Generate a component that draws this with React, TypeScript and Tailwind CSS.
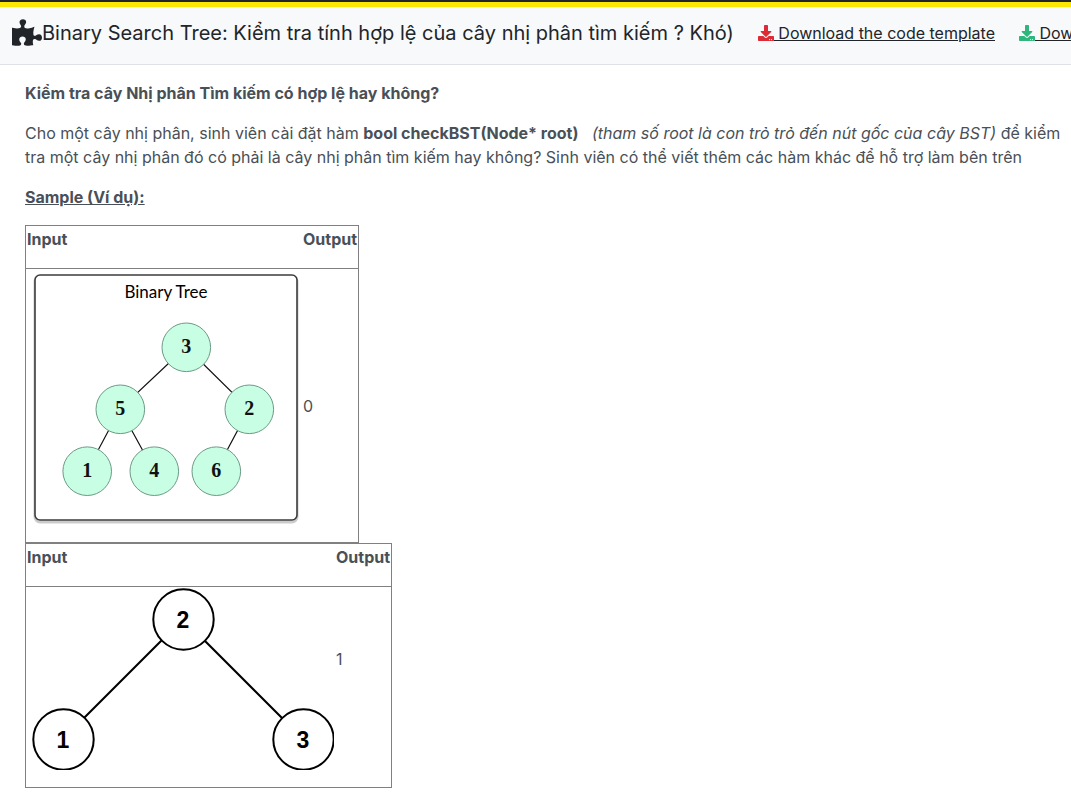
import React from "react";
import { FaDownload, FaPuzzlePiece } from "react-icons/fa";

type Point = { label: string; x: number; y: number };

const mintNodes: Point[] = [
  { label: "3", x: 159.3, y: 77.3 },
  { label: "5", x: 93.3, y: 139.3 },
  { label: "2", x: 222.3, y: 139.3 },
  { label: "1", x: 60.2, y: 201.2 },
  { label: "4", x: 127.3, y: 201.2 },
  { label: "6", x: 189.3, y: 201.2 },
];

const plainNodes: Point[] = [
  { label: "2", x: 156, y: 31 },
  { label: "1", x: 36, y: 151 },
  { label: "3", x: 276, y: 151 },
];

function InvalidTree() {
  return (
    <svg width="274" height="255" viewBox="0 0 274 255" className="block" role="img" aria-label="Binary Tree">
      <rect x="8" y="7" width="262" height="245" rx="5" fill="none" stroke="#000" strokeOpacity="0.2" strokeWidth="3" />
      <rect x="8" y="5" width="262" height="245" rx="5" fill="#fff" stroke="#3c3c3c" strokeWidth="1.6" />
      <text x="139" y="28" textAnchor="middle" fontFamily="Lato, sans-serif" fontSize="17" fill="#000">
        Binary Tree
      </text>
      <path d="M159 77L93 139L60 201M93 139L127 201M159 77L222 139L189 201" fill="none" stroke="#111" strokeWidth="1.2" />
      {mintNodes.map((n) => (
        <g key={n.label}>
          <circle cx={n.x} cy={n.y} r="24.3" fill="#c8ffe4" stroke="#6d9a85" strokeWidth="1" />
          <text
            x={n.x}
            y={n.y + 6}
            textAnchor="middle"
            fontFamily="'Liberation Serif', serif"
            fontWeight="700"
            fontSize="20"
            fill="#111"
          >
            {n.label}
          </text>
        </g>
      ))}
    </svg>
  );
}

function ValidTree() {
  return (
    <svg width="307" height="182" viewBox="0 0 307 182" className="block" role="img" aria-label="2, 1, 3">
      <path d="M36 151L156 31L276 151" fill="none" stroke="#000" strokeWidth="2" />
      {plainNodes.map((n) => (
        <g key={n.label}>
          <circle cx={n.x + 0.5} cy={n.y + 0.5} r="30.2" fill="#fff" stroke="#000" strokeWidth="2" />
          <text
            x={n.x}
            y={n.y + 9}
            textAnchor="middle"
            fontFamily="'Liberation Sans', sans-serif"
            fontWeight="700"
            fontSize="23"
            fill="#000"
          >
            {n.label}
          </text>
        </g>
      ))}
    </svg>
  );
}

function Sample({ input, children }: { input: React.ReactNode; children: React.ReactNode }) {
  return (
    <table className="border-collapse border border-[#808080]">
      <thead>
        <tr className="border-b border-[#808080] text-left">
          <th scope="col" className="p-px pb-[17px] font-bold">Input</th>
          <th scope="col" className="p-px pb-[17px] font-bold">Output</th>
        </tr>
      </thead>
      <tbody>
        <tr>
          <td className="p-px pb-[17px]">{input}</td>
          <td className="p-px">{children}</td>
        </tr>
      </tbody>
    </table>
  );
}

export default function App() {
  return (
    <div className="overflow-x-hidden bg-white font-['Inter','Noto_Sans',sans-serif] text-base text-[#495057]">
      <div className="h-[7px] border-t-2 border-[#212529] bg-[#ffe600]" />
      <header className="flex h-[58px] items-center border-b border-[#dee2e6] bg-[#f8f9fa] pb-1.5 pl-3 whitespace-nowrap text-[#212529]">
        <FaPuzzlePiece className="h-[27px] w-[30px] shrink-0" />
        <h1 className="mr-6 text-xl font-normal">
          Binary Search Tree: Kiểm tra tính hợp lệ của cây nhị phân tìm kiếm ? Khó)
        </h1>
        <a href="#template" className="mr-6 underline">
          <FaDownload className="inline align-[-2px] text-[#dc2b35]" /> Download the code template
        </a>
        <a href="#data" className="underline">
          <FaDownload className="inline align-[-2px] text-[#2eb67d]" /> Download
        </a>
      </header>
      <main className="flex flex-col gap-4 pt-4 pr-2 pb-6 pl-[25px]">
        <p className="font-bold">Kiểm tra cây Nhị phân Tìm kiếm có hợp lệ hay không?</p>
        <p>
          Cho một cây nhị phân, sinh viên cài đặt hàm <strong>bool checkBST(Node* root)</strong> &nbsp;
          <em> (tham số root là con trỏ trỏ đến nút gốc của cây BST)</em> để kiểm tra một cây nhị phân đó có phải là cây
          nhị phân tìm kiếm hay không? Sinh viên có thể viết thêm các hàm khác để hỗ trợ làm bên trên
        </p>
        <h2 className="font-bold underline">Sample (Ví dụ):</h2>
        <div>
          <Sample input={<InvalidTree />}>0</Sample>
          <Sample input={<ValidTree />}>
            <p className="pb-14">1</p>
          </Sample>
        </div>
      </main>
    </div>
  );
}
